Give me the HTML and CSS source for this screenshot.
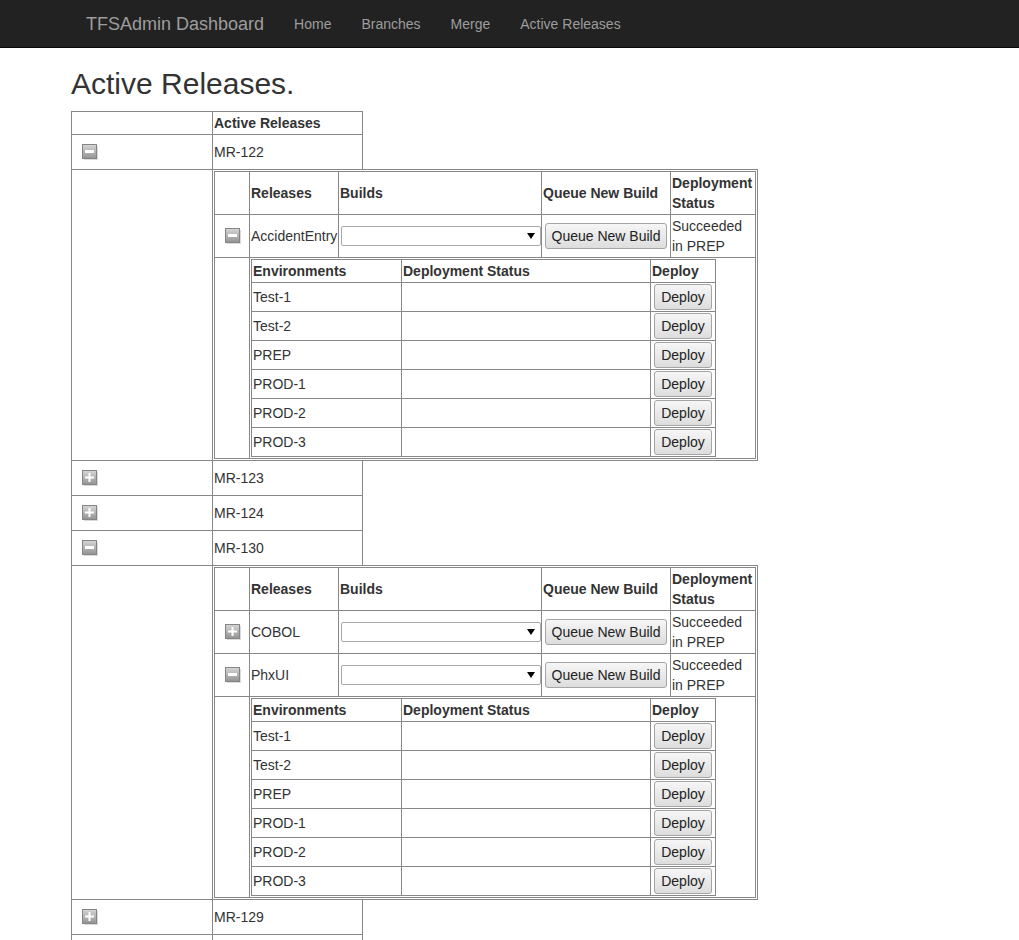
FILE: index.html
```html
<!DOCTYPE html>
<html lang="en">
<head>
<meta charset="utf-8">
<title>Active Releases - TFSAdmin Dashboard</title>
<link rel="stylesheet" href="styles.css">
</head>
<body>
<svg class="defs" width="0" height="0" aria-hidden="true">
  <defs>
    <linearGradient id="tg" x1="0" y1="0" x2="0" y2="1">
      <stop offset="0" stop-color="#d6d6d6"/>
      <stop offset="1" stop-color="#939393"/>
    </linearGradient>
    <symbol id="i-minus" viewBox="0 0 16 16">
      <rect x="2" y="2" width="14" height="14" fill="#dadada"/>
      <rect x="0.5" y="0.5" width="14" height="14" fill="url(#tg)" stroke="#858585"/>
      <rect x="3" y="6" width="9" height="3" fill="#ffffff"/>
    </symbol>
    <symbol id="i-plus" viewBox="0 0 16 16">
      <rect x="2" y="2" width="14" height="14" fill="#dadada"/>
      <rect x="0.5" y="0.5" width="14" height="14" fill="url(#tg)" stroke="#858585"/>
      <rect x="3" y="6.5" width="9" height="2" fill="#ffffff"/>
      <rect x="6.5" y="3" width="2" height="9" fill="#ffffff"/>
    </symbol>
  </defs>
</svg>

<nav class="navbar">
  <div class="container nav-inner">
    <a class="brand" href="#">TFSAdmin Dashboard</a>
    <ul class="nav">
      <li><a href="#">Home</a></li>
      <li><a href="#">Branches</a></li>
      <li><a href="#">Merge</a></li>
      <li><a href="#">Active Releases</a></li>
    </ul>
  </div>
</nav>

<div class="container page">
  <h2>Active Releases.</h2>

  <table class="grid outer">
    <colgroup><col class="o0"><col class="o1"></colgroup>
    <tr class="ohdr"><th></th><th>Active Releases</th></tr>

    <tr class="mr"><td class="ic"><svg class="tog"><use href="#i-minus"/></svg></td><td>MR-122</td></tr>
    <tr class="nest-row">
      <td></td>
      <td class="nest-cell">
        <div class="frame">
          <table class="grid rel">
            <colgroup><col class="r0"><col class="r1"><col class="r2"><col class="r3"><col class="r4"></colgroup>
            <tr class="rhdr"><th></th><th>Releases</th><th>Builds</th><th>Queue New Build</th><th>Deployment Status</th></tr>
            <tr class="rrow">
              <td class="ic"><svg class="tog"><use href="#i-minus"/></svg></td>
              <td>AccidentEntry</td>
              <td class="ctl"><span class="sel"><select aria-label="Builds"><option></option></select></span></td>
              <td class="center"><button class="btn">Queue New Build</button></td>
              <td>Succeeded in PREP</td>
            </tr>
            <tr>
              <td></td>
              <td colspan="4" class="env-cell">
                <table class="grid env">
                  <colgroup><col class="e0"><col class="e1"><col class="e2"></colgroup>
                  <tr class="ehdr"><th>Environments</th><th>Deployment Status</th><th>Deploy</th></tr>
                  <tr class="erow"><td>Test-1</td><td></td><td class="center"><button class="btn">Deploy</button></td></tr>
                  <tr class="erow"><td>Test-2</td><td></td><td class="center"><button class="btn">Deploy</button></td></tr>
                  <tr class="erow"><td>PREP</td><td></td><td class="center"><button class="btn">Deploy</button></td></tr>
                  <tr class="erow"><td>PROD-1</td><td></td><td class="center"><button class="btn">Deploy</button></td></tr>
                  <tr class="erow"><td>PROD-2</td><td></td><td class="center"><button class="btn">Deploy</button></td></tr>
                  <tr class="erow"><td>PROD-3</td><td></td><td class="center"><button class="btn">Deploy</button></td></tr>
                </table>
              </td>
            </tr>
          </table>
        </div>
      </td>
    </tr>

    <tr class="mr"><td class="ic"><svg class="tog"><use href="#i-plus"/></svg></td><td>MR-123</td></tr>
    <tr class="mr"><td class="ic"><svg class="tog"><use href="#i-plus"/></svg></td><td>MR-124</td></tr>
    <tr class="mr"><td class="ic"><svg class="tog"><use href="#i-minus"/></svg></td><td>MR-130</td></tr>
    <tr class="nest-row">
      <td></td>
      <td class="nest-cell">
        <div class="frame">
          <table class="grid rel">
            <colgroup><col class="r0"><col class="r1"><col class="r2"><col class="r3"><col class="r4"></colgroup>
            <tr class="rhdr"><th></th><th>Releases</th><th>Builds</th><th>Queue New Build</th><th>Deployment Status</th></tr>
            <tr class="rrow">
              <td class="ic"><svg class="tog"><use href="#i-plus"/></svg></td>
              <td>COBOL</td>
              <td class="ctl"><span class="sel"><select aria-label="Builds"><option></option></select></span></td>
              <td class="center"><button class="btn">Queue New Build</button></td>
              <td>Succeeded in PREP</td>
            </tr>
            <tr class="rrow">
              <td class="ic"><svg class="tog"><use href="#i-minus"/></svg></td>
              <td>PhxUI</td>
              <td class="ctl"><span class="sel"><select aria-label="Builds"><option></option></select></span></td>
              <td class="center"><button class="btn">Queue New Build</button></td>
              <td>Succeeded in PREP</td>
            </tr>
            <tr>
              <td></td>
              <td colspan="4" class="env-cell">
                <table class="grid env">
                  <colgroup><col class="e0"><col class="e1"><col class="e2"></colgroup>
                  <tr class="ehdr"><th>Environments</th><th>Deployment Status</th><th>Deploy</th></tr>
                  <tr class="erow"><td>Test-1</td><td></td><td class="center"><button class="btn">Deploy</button></td></tr>
                  <tr class="erow"><td>Test-2</td><td></td><td class="center"><button class="btn">Deploy</button></td></tr>
                  <tr class="erow"><td>PREP</td><td></td><td class="center"><button class="btn">Deploy</button></td></tr>
                  <tr class="erow"><td>PROD-1</td><td></td><td class="center"><button class="btn">Deploy</button></td></tr>
                  <tr class="erow"><td>PROD-2</td><td></td><td class="center"><button class="btn">Deploy</button></td></tr>
                  <tr class="erow"><td>PROD-3</td><td></td><td class="center"><button class="btn">Deploy</button></td></tr>
                </table>
              </td>
            </tr>
          </table>
        </div>
      </td>
    </tr>

    <tr class="mr"><td class="ic"><svg class="tog"><use href="#i-plus"/></svg></td><td>MR-129</td></tr>
    <tr class="mr"><td class="ic"></td><td></td></tr>
  </table>
</div>
</body>
</html>
```

FILE: styles.css
```css
* { box-sizing: border-box; }

html, body {
  margin: 0;
  padding: 0;
}

body {
  font-family: "Liberation Sans", Arial, Helvetica, sans-serif;
  font-size: 14px;
  line-height: 1.42857;
  color: #333;
  background: #fff;
}

.defs {
  display: block;
  width: 0;
  height: 0;
  overflow: hidden;
}

/* navbar */
.navbar {
  background: #222;
  border-bottom: 1px solid #080808;
  height: 48px;
}

.container {
  margin-left: 56px;
  padding: 0 15px;
}

.nav-inner {
  display: flex;
  align-items: center;
  height: 47px;
}

.brand {
  font-size: 18px;
  line-height: 20px;
  color: #9d9d9d;
  text-decoration: none;
  padding: 0 15px;
}

.nav {
  display: flex;
  list-style: none;
  margin: 0;
  padding: 0;
}

.nav a {
  display: block;
  padding: 0 15px;
  line-height: 20px;
  color: #9d9d9d;
  text-decoration: none;
}

/* heading */
h2 {
  font-size: 30px;
  font-weight: 500;
  line-height: 1.1;
  margin: 19px 0 11px;
}

/* grids */
.grid {
  border-collapse: collapse;
  border-spacing: 0;
}

.grid th,
.grid td {
  border: 1px solid #888;
  padding: 1px 0 0 1px;
  text-align: left;
  vertical-align: middle;
}

.grid th { font-weight: bold; }

.grid td.center { text-align: center; padding: 0; }

.grid td.ctl { padding: 0 0 0 1px; }

.grid td.ic { padding: 0 0 0 10px; }

.tog {
  display: block;
  width: 16px;
  height: 16px;
}

/* outer grid */
.outer {
  table-layout: fixed;
  width: 291px;
}

.o0 { width: 141px; }
.o1 { width: 150px; }

.ohdr th { height: 23px; }
.mr td { height: 35px; }

.grid td.nest-cell {
  vertical-align: top;
  padding: 0;
  border-right-style: hidden;
}

.frame {
  width: max-content;
  border: 1px solid #888;
  padding: 1px;
  margin: -1px 0 -1px -1px;
  background: #fff;
}

/* release grid */
.rel {
  table-layout: fixed;
  width: 541px;
  background: #fff;
}

.r0 { width: 35px; }
.r1 { width: 89px; }
.r2 { width: 203px; }
.r3 { width: 129px; }
.r4 { width: 85px; }

.rhdr th { height: 43px; }
.rrow td { height: 43px; }

.grid td.env-cell {
  padding: 1px;
}

/* environments grid */
.env {
  table-layout: fixed;
  width: 464px;
}

.e0 { width: 150px; }
.e1 { width: 249px; }
.e2 { width: 65px; }

.ehdr th { height: 23px; }
.erow td { height: 29px; }

/* form controls */
.btn {
  font: inherit;
  color: #222;
  line-height: 20px;
  padding: 2px 6px;
  margin: 0;
  border: 1px solid #a5a5a5;
  border-radius: 3px;
  background: linear-gradient(#f6f6f6, #dddddd);
  vertical-align: middle;
}

.sel {
  position: relative;
  display: inline-block;
  margin-left: 1px;
  vertical-align: middle;
}

.sel select {
  -webkit-appearance: none;
  appearance: none;
  display: block;
  width: 200px;
  height: 20px;
  margin: 0;
  padding: 0 2px;
  font: inherit;
  font-size: 13px;
  line-height: 18px;
  color: #000;
  background: #fff;
  border: 1px solid #a9a9a9;
  border-radius: 2px;
}

.sel::after {
  content: "";
  position: absolute;
  right: 6px;
  top: 7px;
  width: 0;
  height: 0;
  border-left: 4px solid transparent;
  border-right: 4px solid transparent;
  border-top: 6px solid #000;
  pointer-events: none;
}
```
